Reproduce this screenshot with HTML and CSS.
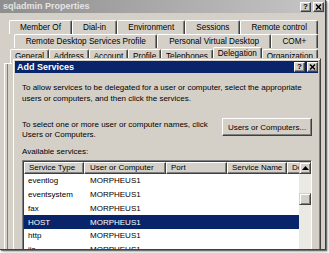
FILE: index.html
```html
<!DOCTYPE html>
<html>
<head>
<meta charset="utf-8">
<link rel="stylesheet" href="styles.css">
</head>
<body>
<div class="shot">
  <div class="win">
    <div class="titlebar">
      <span class="title">sqladmin Properties</span>
      <div class="tbtns">
        <span class="tbtn">?</span>
        <span class="tbtn"><svg width="7" height="6" viewBox="0 0 7 6"><path d="M1 0.5 L6 5.5 M6 0.5 L1 5.5" stroke="#000" stroke-width="1.5"/></svg></span>
      </div>
    </div>
    <div class="tabs">
      <div class="tabrow r1">
        <div class="tab">Member Of</div>
        <div class="tab">Dial-in</div>
        <div class="tab">Environment</div>
        <div class="tab">Sessions</div>
        <div class="tab">Remote control</div>
      </div>
      <div class="tabrow r2">
        <div class="tab">Remote Desktop Services Profile</div>
        <div class="tab">Personal Virtual Desktop</div>
        <div class="tab">COM+</div>
      </div>
      <div class="tabrow r3">
        <div class="tab">General</div>
        <div class="tab">Address</div>
        <div class="tab">Account</div>
        <div class="tab">Profile</div>
        <div class="tab">Telephones</div>
        <div class="tab sel">Delegation</div>
        <div class="tab">Organization</div>
      </div>
      <div class="page"><div class="group"></div></div>
    </div>
  </div>

  <div class="dlg">
    <div class="dtitle">
      <span class="dname">Add Services</span>
      <div class="tbtns">
        <span class="tbtn">?</span>
        <span class="tbtn"><svg width="7" height="6" viewBox="0 0 7 6"><path d="M1 0.5 L6 5.5 M6 0.5 L1 5.5" stroke="#000" stroke-width="1.5"/></svg></span>
      </div>
    </div>
    <div class="dbody">
      <p class="txt">To allow services to be delegated for a user or computer, select the appropriate users or computers, and then click the services.</p>
      <div class="pick">
        <p class="txt pick-txt">To select one or more user or computer names, click Users or Computers.</p>
        <div class="btn">Users or Computers...</div>
      </div>
      <div class="label">Available services:</div>
      <div class="list">
        <div class="cols">
          <div class="hdr">
            <div class="hcell w1">Service Type</div>
            <div class="hcell w2">User or Computer</div>
            <div class="hcell w3">Port</div>
            <div class="hcell w4">Service Name</div>
            <div class="hcell w5">Domain</div>
          </div>
          <div class="row"><span class="c1">eventlog</span><span class="c2">MORPHEUS1</span></div>
          <div class="row"><span class="c1">eventsystem</span><span class="c2">MORPHEUS1</span></div>
          <div class="row"><span class="c1">fax</span><span class="c2">MORPHEUS1</span></div>
          <div class="row sel"><span class="c1">HOST</span><span class="c2">MORPHEUS1</span></div>
          <div class="row"><span class="c1">http</span><span class="c2">MORPHEUS1</span></div>
          <div class="row"><span class="c1">iis</span><span class="c2">MORPHEUS1</span></div>
        </div>
        <div class="vsb">
          <div class="sbtn"><svg width="7" height="4" viewBox="0 0 7 4"><polygon points="3.5,0 7,4 0,4" fill="#000"/></svg></div>
          <div class="thumb"></div>
        </div>
      </div>
    </div>
  </div>
</div>
</body>
</html>
```

FILE: styles.css
```css
* { box-sizing: border-box; }
html, body { margin: 0; padding: 0; background: #fff; }
body {
  width: 329px; height: 253px; overflow: hidden;
  font-family: "Liberation Sans", Arial, sans-serif;
  font-size: 8px; color: #000;
}
p { margin: 0; }

.shot {
  position: relative;
  width: 326px; height: 250px;
  overflow: hidden;
  background: #d4d0c8;
  border-right: 1px solid #404040;
  border-bottom: 1px solid #404040;
  box-shadow: 1px 1px 1px rgba(0,0,0,.45), 2px 2px 3px rgba(0,0,0,.25);
}

.win { height: 100%; display: flex; flex-direction: column; }

.titlebar {
  height: 13px; flex: none;
  display: flex; align-items: center; justify-content: space-between;
  padding: 0 1px 0 3px;
  background: linear-gradient(90deg, #8e8e8e, #c6c6c6);
}
.title { font-weight: bold; font-size: 9px; color: #e4e4e4; line-height: 11px; }

.tbtns { display: flex; gap: 2px; }
.tbtn {
  width: 11px; height: 10px;
  display: flex; align-items: center; justify-content: center;
  background: #d4d0c8;
  border: 1px solid; border-color: #fff #404040 #404040 #fff;
  box-shadow: inset -1px -1px #808080;
  font-weight: bold; font-size: 8px; line-height: 8px;
}

.tabs { flex: 1; display: flex; flex-direction: column; padding: 7px 7px 0 0; }
.tabrow { display: flex; height: 14px; flex: none; }
.r1 { margin-left: 9px; }
.r2 { margin-left: 14px; }
.r3 { margin-left: 10px; margin-top: 1px; align-items: flex-end; }
.tab {
  flex: 1 1 auto;
  height: 14px;
  display: flex; align-items: center; justify-content: center;
  padding: 0 2px;
  white-space: nowrap;
  font-size: 8.2px;
  border-top: 1px solid #fff; border-left: 1px solid #fff; border-right: 1px solid #404040;
  border-radius: 2px 2px 0 0;
  box-shadow: inset -1px 0 #808080;
}
.tab.sel { height: 16px; margin-top: -2px; align-items: flex-start; padding-top: 1px; }

.page { flex: 1; margin-left: 4px; border-left: 1px solid #fff; border-top: 1px solid #fff; padding-left: 2px; }
.group { height: 100%; border-left: 1px solid #808080; box-shadow: 1px 0 #fff; }

.dlg {
  position: absolute; left: 12px; top: 58px;
  width: 309px; height: 200px;
  background: #d4d0c8;
  border: 1px solid; border-color: #d4d0c8 #404040 #404040 #d4d0c8;
  box-shadow: inset 1px 1px #fff, inset -1px -1px #808080;
  padding: 2px;
}
.dtitle {
  height: 12px;
  display: flex; align-items: center; justify-content: space-between;
  padding: 0 0 0 2px;
  background: #0a246a;
}
.dname { color: #fff; font-weight: bold; font-size: 9px; line-height: 11px; }

.dbody { padding: 10px 6px 0 7px; }
.txt { line-height: 10.5px; }
.pick { display: flex; justify-content: space-between; align-items: flex-start; margin-top: 14px; }
.pick-txt { width: 190px; margin-top: 1.5px; }
.btn {
  width: 90px; height: 18px; flex: none;
  display: flex; align-items: center; justify-content: center;
  border: 1px solid; border-color: #fff #404040 #404040 #fff;
  box-shadow: inset -1px -1px #808080;
}
.label { margin-top: 6px; line-height: 10.5px; }

.list {
  margin-top: 3px;
  width: 290px; height: 100px;
  display: flex;
  background: #fff;
  border: 1px solid; border-color: #808080 #fff #fff #808080;
  box-shadow: inset 1px 1px #404040;
  padding: 1px 0 0 1px;
}
.cols { flex: 1; min-width: 0; overflow: hidden; }
.hdr { display: flex; height: 12px; }
.hcell {
  flex: none; height: 12px;
  padding-left: 4px;
  line-height: 10px;
  white-space: nowrap; overflow: hidden;
  background: #d4d0c8;
  border: 1px solid; border-color: #fff #404040 #404040 #fff;
  border-width: 1px 1px 1px 1px;
  box-shadow: inset -1px -1px #808080;
}
.w1 { width: 60px; }
.w2 { width: 82px; padding-left: 5px; }
.w3 { width: 61px; }
.w4 { width: 60px; }
.w5 { width: 20px; }

.row { display: flex; align-items: center; height: 13.75px; white-space: nowrap; }
.row.sel { background: #0a246a; color: #fff; }
.c1 { width: 60px; padding-left: 4px; }
.c2 { padding-left: 6px; }

.vsb { width: 12px; flex: none; display: flex; flex-direction: column; background: #ebe9e4; }
.sbtn, .thumb {
  width: 12px; height: 12px; flex: none;
  display: flex; align-items: center; justify-content: center;
  background: #d4d0c8;
  border: 1px solid; border-color: #d4d0c8 #404040 #404040 #d4d0c8;
  box-shadow: inset 1px 1px #fff, inset -1px -1px #808080;
}
.thumb { margin-top: 19px; }
```
